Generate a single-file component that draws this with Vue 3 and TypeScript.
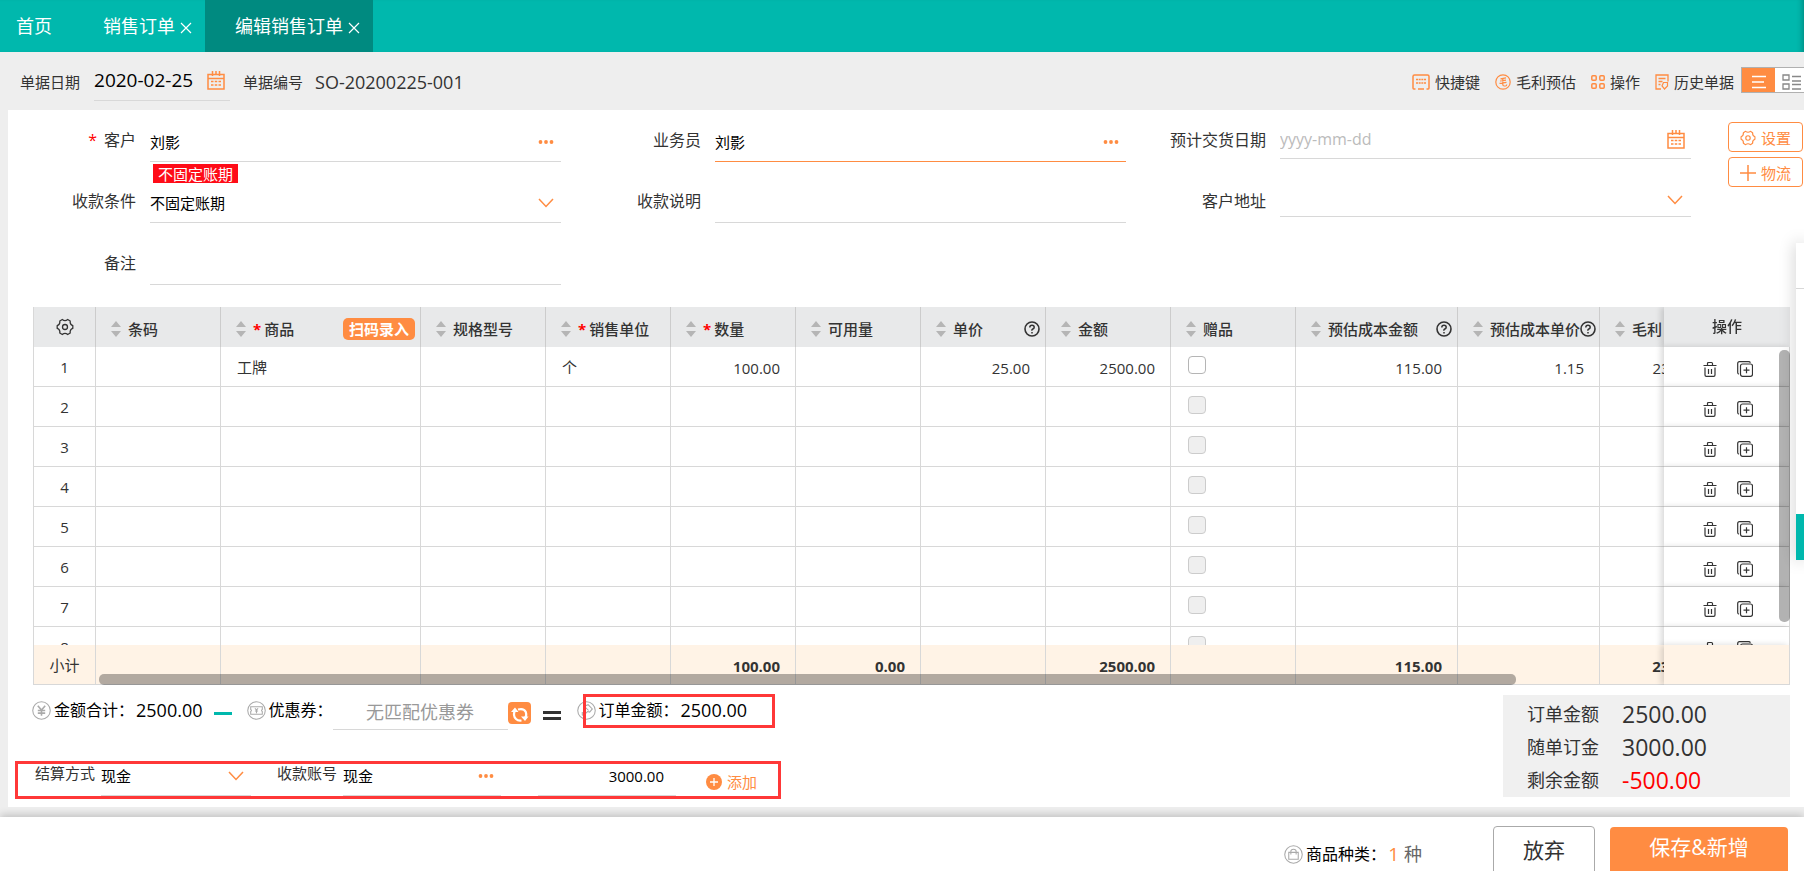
<script setup lang="ts">
import { ref } from 'vue'

interface Column {
  key: string
  label: string
  width: number
  required?: boolean
  help?: boolean
  align?: 'left' | 'right'
}

const columns: Column[] = [
  { key: 'barcode', label: '条码', width: 125 },
  { key: 'product', label: '商品', width: 200, required: true },
  { key: 'spec', label: '规格型号', width: 125 },
  { key: 'unit', label: '销售单位', width: 125, required: true },
  { key: 'qty', label: '数量', width: 125, required: true, align: 'right' },
  { key: 'available', label: '可用量', width: 125, align: 'right' },
  { key: 'price', label: '单价', width: 125, help: true, align: 'right' },
  { key: 'amount', label: '金额', width: 125, align: 'right' },
  { key: 'gift', label: '赠品', width: 125 },
  { key: 'cost', label: '预估成本金额', width: 162, help: true, align: 'right' },
  { key: 'unitCost', label: '预估成本单价', width: 142, help: true, align: 'right' },
  { key: 'profit', label: '毛利', width: 124, align: 'right' },
]

const firstRow: Record<string, string> = {
  product: '工牌',
  unit: '个',
  qty: '100.00',
  price: '25.00',
  amount: '2500.00',
  cost: '115.00',
  unitCost: '1.15',
  profit: '2385.00',
}
const rows: Record<string, string>[] = [firstRow, {}, {}, {}, {}, {}, {}, {}]

const totals: Record<string, string> = {
  qty: '100.00',
  available: '0.00',
  amount: '2500.00',
  cost: '115.00',
  profit: '2385.00',
}

const orderDate = ref('2020-02-25')
const customer = ref('刘影')
const salesman = ref('刘影')
const deliveryDate = ref('')
const terms = ref('不固定账期')
const termsNote = ref('')
const address = ref('')
const remark = ref('')
const coupon = ref('')
const payMethod = ref('现金')
const account = ref('现金')
const payAmount = ref('3000.00')
</script>

<template>
  <div class="page">
    <svg class="defs" aria-hidden="true">
      <symbol id="i-cal" viewBox="0 0 18 20">
        <path d="M1 4.500h16v14.500h-16zM1 8.500h16M5.500 1v5M9 1v3M12.500 1v5" fill="none" stroke="currentColor" stroke-width="1.500" />
        <path d="M4 11.500h10M4 15h10" fill="none" stroke="currentColor" stroke-width="1.500" stroke-dasharray="2.500 1.250" />
      </symbol>
      <symbol id="i-more" viewBox="0 0 16 6">
        <circle cx="2.500" cy="3" r="1.900" fill="currentColor" /><circle cx="8" cy="3" r="1.900" fill="currentColor" /><circle cx="13.500" cy="3" r="1.900" fill="currentColor" />
      </symbol>
      <symbol id="i-down" viewBox="0 0 16 10">
        <path d="M1 1l7 7.500L15 1" fill="none" stroke="currentColor" stroke-width="1.500" />
      </symbol>
      <symbol id="i-x" viewBox="0 0 12 12">
        <path d="M1 1l10 10M11 1L1 11" fill="none" stroke="currentColor" stroke-width="1.200" />
      </symbol>
      <symbol id="i-gear" viewBox="0 0 18 18">
        <path d="M6.300 1.500Q9 3.600 11.700 1.500L14.200 3Q13.700 6.400 16.800 7.600V10.400Q13.700 11.600 14.200 15L11.700 16.500Q9 14.400 6.300 16.500L3.800 15Q4.300 11.600 1.200 10.400V7.600Q4.300 6.400 3.800 3Z" fill="none" stroke="currentColor" stroke-width="1.300" stroke-linejoin="round" />
        <circle cx="9" cy="9" r="2.500" fill="none" stroke="currentColor" stroke-width="1.300" />
      </symbol>
      <symbol id="i-help" viewBox="0 0 16 16">
        <circle cx="8" cy="8" r="7" fill="none" stroke="currentColor" stroke-width="1.600" />
        <path d="M5.800 6.500Q5.800 4.300 8 4.300T10.200 6.300Q10.200 7.400 8.900 8T8 9.700M8 10.900v1.500" fill="none" stroke="currentColor" stroke-width="1.500" />
      </symbol>
      <symbol id="i-trash" viewBox="0 0 14 16">
        <path d="M.5 4.500h13M4.500 4V2.500q0-1 1-1h3q1 0 1 1V4M2 6.500V14q0 1.300 1.300 1.300h7.400Q12 15.300 12 14V6.500M5.500 8v5M8.500 8v5" fill="none" stroke="currentColor" stroke-width="1.200" />
      </symbol>
      <symbol id="i-copy" viewBox="0 0 16 16">
        <rect x="3.500" y="3" width="12" height="12.300" rx="2" fill="none" stroke="currentColor" stroke-width="1.200" />
        <path d="M1.800 13.200Q.7 12.600.7 11.500V2.500Q.7.700 2.500.7h9q1.500 0 1.900 1M9.500 6.200v6M6.500 9.200h6" fill="none" stroke="currentColor" stroke-width="1.200" />
      </symbol>
    </svg>

    <nav class="tabs">
      <a class="tab home" href="#home">首页</a>
      <div class="tab">
        <a href="#orders">销售订单</a>
        <button class="close" type="button" aria-label="关闭"><svg><use href="#i-x" /></svg></button>
      </div>
      <div class="tab active">
        <a href="#edit">编辑销售订单</a>
        <button class="close" type="button" aria-label="关闭"><svg><use href="#i-x" /></svg></button>
      </div>
    </nav>

    <header class="bar">
      <label for="date">单据日期</label>
      <div class="date-box">
        <input id="date" v-model="orderDate" type="text">
        <svg class="cal"><use href="#i-cal" /></svg>
      </div>
      <span class="code-label">单据编号</span>
      <span class="code">SO-20200225-001</span>
      <div class="tools">
        <button type="button">
          <svg class="t18" viewBox="0 0 18 16"><path d="M3.500 15H1.800Q1 15 1 14V2.500Q1 1 2.500 1h13Q17 1 17 2.500V14q0 1-.8 1h-1.700M6 15h6" fill="none" stroke="currentColor" stroke-width="1.500" /><path d="M4 5.500h10M4 9h10" fill="none" stroke="currentColor" stroke-width="1.500" stroke-dasharray="2 .67" /></svg>
          <span>快捷键</span>
        </button>
        <button type="button">
          <svg class="t16" viewBox="0 0 16 16"><circle cx="8" cy="8" r="7.200" fill="none" stroke="currentColor" stroke-width="1.200" /><path d="M11 3.800L5.500 4.800M5 7l6-.8M4.500 9.300l7-.9M7.800 4.500v6q0 1.500 1.500 1.500h1.200q1.200 0 1.200-1.500" fill="none" stroke="currentColor" stroke-width="1.200" /></svg>
          <span>毛利预估</span>
        </button>
        <button type="button">
          <svg class="t14" viewBox="0 0 14 14"><rect x=".8" y=".8" width="4.400" height="4.400" rx="1" /><rect x="8.800" y=".8" width="4.400" height="4.400" rx="1" /><rect x=".8" y="8.800" width="4.400" height="4.400" rx="1" /><rect x="8.800" y="8.800" width="4.400" height="4.400" rx="1" /></svg>
          <span>操作</span>
        </button>
        <button type="button">
          <svg class="t14" viewBox="0 0 14 16"><path d="M6 15H1V1h12v6.500M3.500 4.500h7M3.500 7.500h4M3.500 10.500h2" fill="none" stroke="currentColor" stroke-width="1.300" /><path d="M8.500 8.500h4v3.500L9.500 15 7 12z" fill="none" stroke="currentColor" stroke-width="1.200" /></svg>
          <span>历史单据</span>
        </button>
        <div class="toggle">
          <button class="on" type="button" aria-label="列表视图"><svg viewBox="0 0 16 14"><path d="M1 1.500h14M1 7h12M1 12.500h14" stroke="currentColor" stroke-width="1.500" /></svg></button>
          <button type="button" aria-label="卡片视图"><svg class="cards" viewBox="0 0 19 16"><path d="M1 1h6v5H1zM1 10h6v5H1zM10 2.500h9M10 7h9M10 10.500h9M10 15h9" fill="none" stroke="currentColor" stroke-width="1.300" /></svg></button>
        </div>
      </div>
    </header>

    <main class="panel">
      <form class="form" @submit.prevent>
        <div class="field">
          <label for="cust"><i>*</i>客户</label>
          <div class="line">
            <input id="cust" v-model="customer" type="text">
            <svg class="more"><use href="#i-more" /></svg>
            <span class="tag">不固定账期</span>
          </div>
        </div>
        <div class="field">
          <label for="sales">业务员</label>
          <div class="line focus">
            <input id="sales" v-model="salesman" type="text">
            <svg class="more"><use href="#i-more" /></svg>
          </div>
        </div>
        <div class="field">
          <label for="deliv">预计交货日期</label>
          <div class="line short">
            <input id="deliv" v-model="deliveryDate" type="text" placeholder="yyyy-mm-dd">
            <svg class="cal"><use href="#i-cal" /></svg>
          </div>
        </div>
        <div class="field">
          <label for="terms">收款条件</label>
          <div class="line">
            <select id="terms" v-model="terms"><option>不固定账期</option></select>
            <svg class="down"><use href="#i-down" /></svg>
          </div>
        </div>
        <div class="field">
          <label for="note">收款说明</label>
          <div class="line"><input id="note" v-model="termsNote" type="text"></div>
        </div>
        <div class="field">
          <label for="addr">客户地址</label>
          <div class="line shorter">
            <select id="addr" v-model="address"><option value=""></option></select>
            <svg class="down"><use href="#i-down" /></svg>
          </div>
        </div>
        <div class="field last">
          <label for="remark">备注</label>
          <div class="line"><input id="remark" v-model="remark" type="text"></div>
        </div>
      </form>
      <div class="side-actions">
        <button type="button"><svg><use href="#i-gear" /></svg>设置</button>
        <button type="button"><svg viewBox="0 0 16 16"><path d="M8 0v16M0 8h16" stroke="currentColor" stroke-width="1.500" /></svg>物流</button>
      </div>

      <div class="grid">
        <div class="scroll">
          <table>
            <colgroup>
              <col class="c-no">
              <col v-for="c in columns" :key="c.key" :style="{ width: c.width + 'px' }">
              <col class="c-op">
            </colgroup>
            <thead>
              <tr>
                <th class="no"><svg class="gear"><use href="#i-gear" /></svg></th>
                <th v-for="c in columns" :key="c.key">
                  <div class="head">
                    <svg class="sort" viewBox="0 0 10 16"><path d="M0 6l5-6 5 6zM0 10l5 6 5-6z" fill="#b5b5b5" /></svg>
                    <i v-if="c.required">*</i><span class="name">{{ c.label }}</span>
                    <button v-if="c.key === 'product'" class="scan" type="button">扫码录入</button>
                    <svg v-if="c.help" class="help"><use href="#i-help" /></svg>
                  </div>
                </th>
                <th class="op">操作</th>
              </tr>
            </thead>
            <tbody>
              <tr v-for="(row, n) in rows" :key="n">
                <td class="no">{{ n + 1 }}</td>
                <td v-for="c in columns" :key="c.key" :class="c.align">
                  <input v-if="c.key === 'gift'" type="checkbox" :disabled="n > 0" aria-label="赠品">
                  <template v-else>{{ row[c.key] }}</template>
                </td>
                <td class="op">
                  <div class="ops">
                    <button type="button" aria-label="删除"><svg class="trash"><use href="#i-trash" /></svg></button>
                    <button type="button" aria-label="复制"><svg class="copy"><use href="#i-copy" /></svg></button>
                  </div>
                </td>
              </tr>
            </tbody>
            <tfoot>
              <tr>
                <td class="no">小计</td>
                <td v-for="c in columns" :key="c.key" class="right">{{ totals[c.key] }}</td>
                <td class="op"></td>
              </tr>
            </tfoot>
          </table>
        </div>
        <div class="vbar"></div>
        <div class="hbar"></div>
      </div>

      <div class="bottom">
        <div class="left">
          <div class="sums">
            <svg class="ring" viewBox="0 0 18 18"><circle cx="9" cy="9" r="8.300" /><path d="M5.500 4.500L9 8.500l3.500-4M9 8.500v5.500M5.500 9h7M5.500 11.500h7" stroke-width="1.500" /></svg>
            <span class="cap">金额合计：</span><span class="num">2500.00</span>
            <span class="minus"></span>
            <svg class="ring" viewBox="0 0 18 18"><circle cx="9" cy="9" r="8.300" /><path d="M3.500 5.500h11V8q-1.500 1 0 2v2.500h-11V10q1.500-1 0-2zM7.500 7L9 8.500 10.500 7M9 8.500v3M7.500 9.500h3" /></svg>
            <label class="cap" for="coupon">优惠券：</label>
            <input id="coupon" v-model="coupon" class="coupon" type="text" placeholder="无匹配优惠券">
            <button class="refresh" type="button" aria-label="刷新"><svg viewBox="0 0 23 22"><path d="M7 8.500Q4.500 13.500 8 17q2 2 5.500 1.500M10 7.500q6-1.500 7.800 2.500 1.200 3.500-.8 6" fill="none" stroke="#fff" stroke-width="2.200" /><path d="M3 10l4-4.500 3.500 4.500zM20.500 14.500l-3.500 4.500-4-4.500z" fill="#fff" /></svg></button>
            <span class="equals"></span>
            <div class="total">
              <svg class="ring" viewBox="0 0 18 18"><circle cx="9" cy="9" r="8.300" /><path d="M5 13.500v-3M5 13.500h2.500M7 5l3.500-1.500 4 4-2.500 3-2-.5-3 3M7 5l4 4" /></svg>
              <span class="cap">订单金额：</span><span class="num">2500.00</span>
              <div class="mark"></div>
            </div>
          </div>
          <div class="pay">
            <label for="pm">结算方式</label>
            <div class="pf w150"><select id="pm" v-model="payMethod"><option>现金</option></select><svg class="down"><use href="#i-down" /></svg></div>
            <label class="acct" for="ac">收款账号</label>
            <div class="pf w158"><input id="ac" v-model="account" type="text"><svg class="more"><use href="#i-more" /></svg></div>
            <div class="pf money"><input v-model="payAmount" type="text" aria-label="收款金额"></div>
            <button class="add" type="button"><svg viewBox="0 0 16 16"><circle cx="8" cy="8" r="8" fill="currentColor" /><path d="M8 4v8M4 8h8" stroke="#fff" stroke-width="1.300" /></svg>添加</button>
          </div>
        </div>
        <dl class="summary">
          <div><dt>订单金额</dt><dd>2500.00</dd></div>
          <div><dt>随单订金</dt><dd>3000.00</dd></div>
          <div><dt>剩余金额</dt><dd class="neg">-500.00</dd></div>
        </dl>
      </div>
    </main>

    <footer class="foot">
      <svg class="ring" viewBox="0 0 18 18"><circle cx="9" cy="9" r="8.300" /><path d="M4.500 7h9v6.500h-9zM6.500 9V6q0-2 2.500-2t2.500 2v3" /></svg>
      <span class="kinds">商品种类：</span><b>1</b><span class="unit">种</span>
      <button class="cancel" type="button">放弃</button>
      <button class="save" type="button">保存&amp;新增</button>
    </footer>

    <aside class="drawer"><div class="drawer-head"></div><div class="drawer-tab"></div></aside>
  </div>
</template>

<style>
body {
  margin: 0;
  overflow: hidden;
}
</style>

<style scoped>
* {
  box-sizing: border-box;
}
.page {
  --orange: #ff8c42;
  --teal: #00b8ad;
  position: relative;
  display: flex;
  flex-direction: column;
  height: 100vh;
  overflow: hidden;
  background: #eee;
  color: #333;
  font: 15px/20px "Open Sans", "Noto Sans CJK SC", sans-serif;
}
.defs {
  position: absolute;
  width: 0;
  height: 0;
}
button,
input,
select {
  font: inherit;
  color: inherit;
  background: none;
  border: 0;
  padding: 0;
  margin: 0;
  outline: 0;
  border-radius: 0;
  appearance: none;
  min-width: 0;
}
a {
  color: inherit;
  text-decoration: none;
}
i {
  color: #f00;
  font-style: normal;
}
svg {
  display: block;
  flex: none;
}
.cal {
  width: 18px;
  height: 20px;
  color: var(--orange);
}
.more {
  width: 16px;
  height: 6px;
  color: var(--orange);
}
.down {
  width: 16px;
  height: 10px;
  color: var(--orange);
}

.tabs {
  display: flex;
  flex: none;
  height: 52px;
  background: var(--teal);
  box-shadow: inset -6px 0 6px -5px rgba(0, 0, 0, 0.3);
  color: #fff;
  font-size: 18px;
}
.tab {
  display: flex;
  align-items: center;
  gap: 5px;
  padding: 0 13px 0 30px;
  line-height: 52px;
}
.home {
  padding: 0 21px 0 16px;
}
.active {
  background: #008a80;
}
.close svg {
  width: 12px;
  height: 12px;
  margin-top: 4px;
}

.bar {
  display: flex;
  flex: none;
  align-items: center;
  height: 58px;
  padding: 2px 0 0 20px;
}
.date-box {
  display: flex;
  align-items: center;
  width: 136px;
  height: 37px;
  margin: 0 13px 0 14px;
  padding: 0 5px 4px 0;
  border-bottom: 1px solid #d8d8d8;
  color: #000;
  font-size: 19px;
}
.date-box input {
  flex: 1;
}
.code {
  margin-left: 12px;
  font-size: 18px;
}
.tools {
  display: flex;
  align-items: center;
  gap: 15px;
  margin-left: auto;
}
.tools > button {
  display: flex;
  align-items: center;
  gap: 5px;
}
.tools > button svg {
  color: var(--orange);
}
.t18 {
  width: 18px;
  height: 16px;
}
.t16 {
  width: 16px;
  height: 16px;
}
.t14 {
  width: 14px;
  height: 16px;
}
.t14 rect {
  fill: none;
  stroke: currentColor;
  stroke-width: 1.500;
}
.toggle {
  display: flex;
  width: 63px;
  height: 26px;
  margin: 0 0 4px -8px;
  border: 1px solid #b0b0b0;
  border-right: 0;
  background: #fff;
  overflow: hidden;
}
.toggle button {
  display: flex;
  flex: none;
  align-items: center;
  justify-content: center;
  width: 33px;
  padding-top: 4px;
  color: #888;
}
.toggle .on {
  background: var(--orange);
  color: #fff;
}
.toggle svg {
  width: 16px;
  height: 14px;
}
.toggle .cards {
  width: 19px;
  height: 16px;
}

.panel {
  display: grid;
  grid-template-columns: 1fr auto;
  flex: none;
  margin-left: 8px;
  padding-bottom: 8px;
  background: #fff;
}
.form {
  display: grid;
  grid-template-columns: repeat(3, 1fr);
  grid-auto-rows: 61px;
  column-gap: 12px;
  padding: 12px 37px 0 0;
}
.field {
  display: grid;
  grid-template-columns: 128px 1fr;
  column-gap: 14px;
  align-items: start;
}
.last {
  padding-top: 1px;
}
.field label {
  font-size: 16px;
  line-height: 36px;
  text-align: right;
  white-space: nowrap;
}
.field i {
  margin-right: 7px;
}
.line {
  position: relative;
  display: flex;
  align-items: center;
  height: 40px;
  padding-right: 7px;
  border-bottom: 1px solid #d8d8d8;
  color: #000;
}
.line input,
.line select {
  flex: 1;
}
.focus {
  border-color: var(--orange);
}
.short {
  height: 37px;
  padding: 0 6px 2px 0;
  font-size: 16px;
}
.shorter {
  height: 34px;
  padding-right: 8px;
}
::placeholder {
  color: #bbb;
  opacity: 1;
}
.tag {
  position: absolute;
  top: 42px;
  left: 3px;
  padding: 2px 5px 0;
  background: #ff0c18;
  color: #fff;
  line-height: 17px;
}
.side-actions {
  display: flex;
  flex-direction: column;
  gap: 5px;
  padding: 12px 1px 0 0;
}
.side-actions button {
  display: flex;
  align-items: center;
  justify-content: center;
  gap: 5px;
  width: 75px;
  height: 30px;
  padding-top: 1px;
  border: 1px solid var(--orange);
  border-radius: 4px;
  color: var(--orange);
}
.side-actions svg {
  width: 16px;
  height: 16px;
}

.grid {
  position: relative;
  grid-column: 1 / -1;
  min-width: 0;
  margin: 2px 14px 0 25px;
}
.scroll {
  height: 378px;
  overflow: hidden;
  border-left: 1px solid #d8d8d8;
}
table {
  width: 1815px;
  table-layout: fixed;
  border-collapse: separate;
  border-spacing: 0;
}
.c-no {
  width: 62px;
}
.c-op {
  width: 126px;
}
th,
td {
  height: 40px;
  padding: 0;
  border-right: 1px solid #d8d8d8;
  border-bottom: 1px solid #d8d8d8;
  background: #fff;
  white-space: nowrap;
  text-align: left;
}
th {
  border-right-color: #ccc;
  border-bottom: 0;
  background: #e8e9ea;
  font-weight: 500;
}
td {
  padding: 0 16px;
}
.right {
  padding: 3px 15px 0 0;
  text-align: right;
}
th.no,
td.no {
  padding: 0;
  text-align: center;
}
.gear {
  width: 18px;
  height: 18px;
  margin: 0 auto;
}
.head {
  display: flex;
  align-items: center;
  padding: 4px 5px 0 15px;
}
.sort {
  width: 10px;
  height: 16px;
  margin-right: 7px;
}
.head i {
  margin-right: 3px;
  font-weight: 700;
}
.scan {
  margin-left: auto;
  padding: 0 6px;
  border-radius: 5px;
  background: var(--orange);
  color: #fff;
  font-weight: 700;
  line-height: 22px;
}
.help {
  width: 16px;
  height: 16px;
  margin-left: auto;
}
td input {
  display: block;
  width: 18px;
  height: 18px;
  margin: 0 0 4px 1px;
  border: 1px solid #b5b5b5;
  border-radius: 4px;
}
td input:disabled {
  border-color: #ccc;
  background: #efefef;
}
th.op,
td.op {
  position: sticky;
  right: 0;
  padding: 0;
  text-align: center;
  box-shadow: -3px 0 6px rgba(0, 0, 0, 0.15);
}
th.op {
  padding: 0 0 2px;
  border-right: 0;
}
.ops {
  display: flex;
  gap: 20px;
  padding: 5px 0 0 39px;
}
.trash {
  width: 14px;
  height: 16px;
}
.copy {
  width: 16px;
  height: 16px;
}
tfoot td {
  position: sticky;
  bottom: 0;
  z-index: 1;
  background: #fff3e6;
  font-weight: 700;
}
tfoot td.no {
  font-weight: 400;
}
tfoot td.op {
  z-index: 2;
}
.vbar,
.hbar {
  position: absolute;
  z-index: 3;
  border-radius: 5px;
  background: rgba(0, 0, 0, 0.3);
}
.vbar {
  top: 43px;
  right: 0;
  width: 11px;
  height: 272px;
}
.hbar {
  bottom: 0;
  left: 66px;
  right: 274px;
  height: 11px;
}

.bottom {
  display: flex;
  grid-column: 1 / -1;
  align-items: flex-start;
  justify-content: space-between;
  padding: 10px 14px 0 24px;
}
.sums,
.total {
  display: flex;
  align-items: center;
}
.sums {
  height: 30px;
  color: #000;
}
.ring {
  width: 19px;
  height: 19px;
  fill: none;
  stroke: #aaa;
}
.cap {
  margin-left: 3px;
  font-size: 16px;
}
.num {
  margin-left: 2px;
  font-size: 18px;
}
.minus {
  width: 18px;
  height: 3px;
  margin: 6px 15px 0 11px;
  background: var(--teal);
}
.coupon {
  width: 175px;
  height: 36px;
  margin-top: 4px;
  border-bottom: 1px solid #d8d8d8;
  font-size: 18px;
  text-align: center;
}
.coupon::placeholder {
  color: #999;
}
.refresh {
  width: 23px;
  height: 22px;
  margin-top: 6px;
  border-radius: 4px;
  background: var(--orange);
}
.equals {
  width: 18px;
  height: 9px;
  margin: 10px 16px 0 12px;
  border: solid #333;
  border-width: 3px 0;
}
.total {
  position: relative;
}
.mark {
  position: absolute;
  top: -6px;
  left: 6px;
  width: 192px;
  height: 34px;
  border: 3px solid #ff3838;
}
.pay {
  display: flex;
  width: 766px;
  height: 38px;
  margin: 36px 0 0 -17px;
  padding-left: 17px;
  border: 3px solid #ff3838;
  line-height: 18px;
}
.pf {
  display: flex;
  align-items: center;
  height: 32px;
  margin-left: 6px;
  padding: 0 7px 8px 0;
  border-bottom: 1px solid #d8d8d8;
  color: #000;
}
.pf input,
.pf select {
  flex: 1;
}
.w150 {
  width: 150px;
}
.w158 {
  width: 158px;
}
.acct {
  margin-left: 26px;
}
.money {
  width: 138px;
  margin-left: 37px;
  padding-right: 12px;
}
.money input {
  text-align: right;
}
.add {
  display: flex;
  align-items: center;
  gap: 5px;
  height: 36px;
  margin-left: 30px;
  color: var(--orange);
}
.add svg {
  width: 16px;
  height: 16px;
}
.summary {
  width: 287px;
  margin: 0;
  padding: 2px 24px 1px;
  background: #f0f0f0;
}
.summary div {
  display: flex;
  align-items: center;
  gap: 23px;
  height: 33px;
}
.summary dt {
  font-size: 18px;
}
.summary dd {
  margin: 0;
  font-size: 23px;
}
.summary .neg {
  color: #f00;
}

.foot {
  display: flex;
  flex: none;
  align-items: flex-start;
  justify-content: flex-end;
  height: 70px;
  margin-top: 10px;
  padding: 9px 16px 0 0;
  background: #fff;
  box-shadow: 0 -2px 8px rgba(0, 0, 0, 0.2);
  z-index: 1;
}
.foot .ring {
  margin-top: 19px;
}
.kinds {
  margin: 16px 0 0 3px;
  color: #000;
  font-size: 16px;
  line-height: 24px;
}
.foot b {
  margin: 16px 0 0 2px;
  color: var(--orange);
  font-size: 19px;
  font-weight: 400;
  line-height: 24px;
}
.unit {
  margin: 16px 71px 0 5px;
  color: #666;
  font-size: 18px;
  line-height: 24px;
}
.cancel {
  width: 102px;
  height: 50px;
  padding-bottom: 2px;
  border: 1px solid #aaa;
  border-radius: 4px;
  font-size: 21px;
}
.save {
  width: 178px;
  height: 50px;
  margin: 1px 0 0 15px;
  padding-bottom: 10px;
  border-radius: 4px;
  background: var(--orange);
  color: #fff;
  font-size: 21px;
}

.drawer {
  position: absolute;
  z-index: 4;
  top: 243px;
  right: 0;
  width: 8px;
  background: #fff;
  box-shadow: 0 0 16px rgba(0, 0, 0, 0.25);
}
.drawer-head {
  height: 46px;
  border-bottom: 1px solid #d8d8d8;
}
.drawer-tab {
  height: 46px;
  margin-top: 225px;
  background: var(--teal);
}
</style>
